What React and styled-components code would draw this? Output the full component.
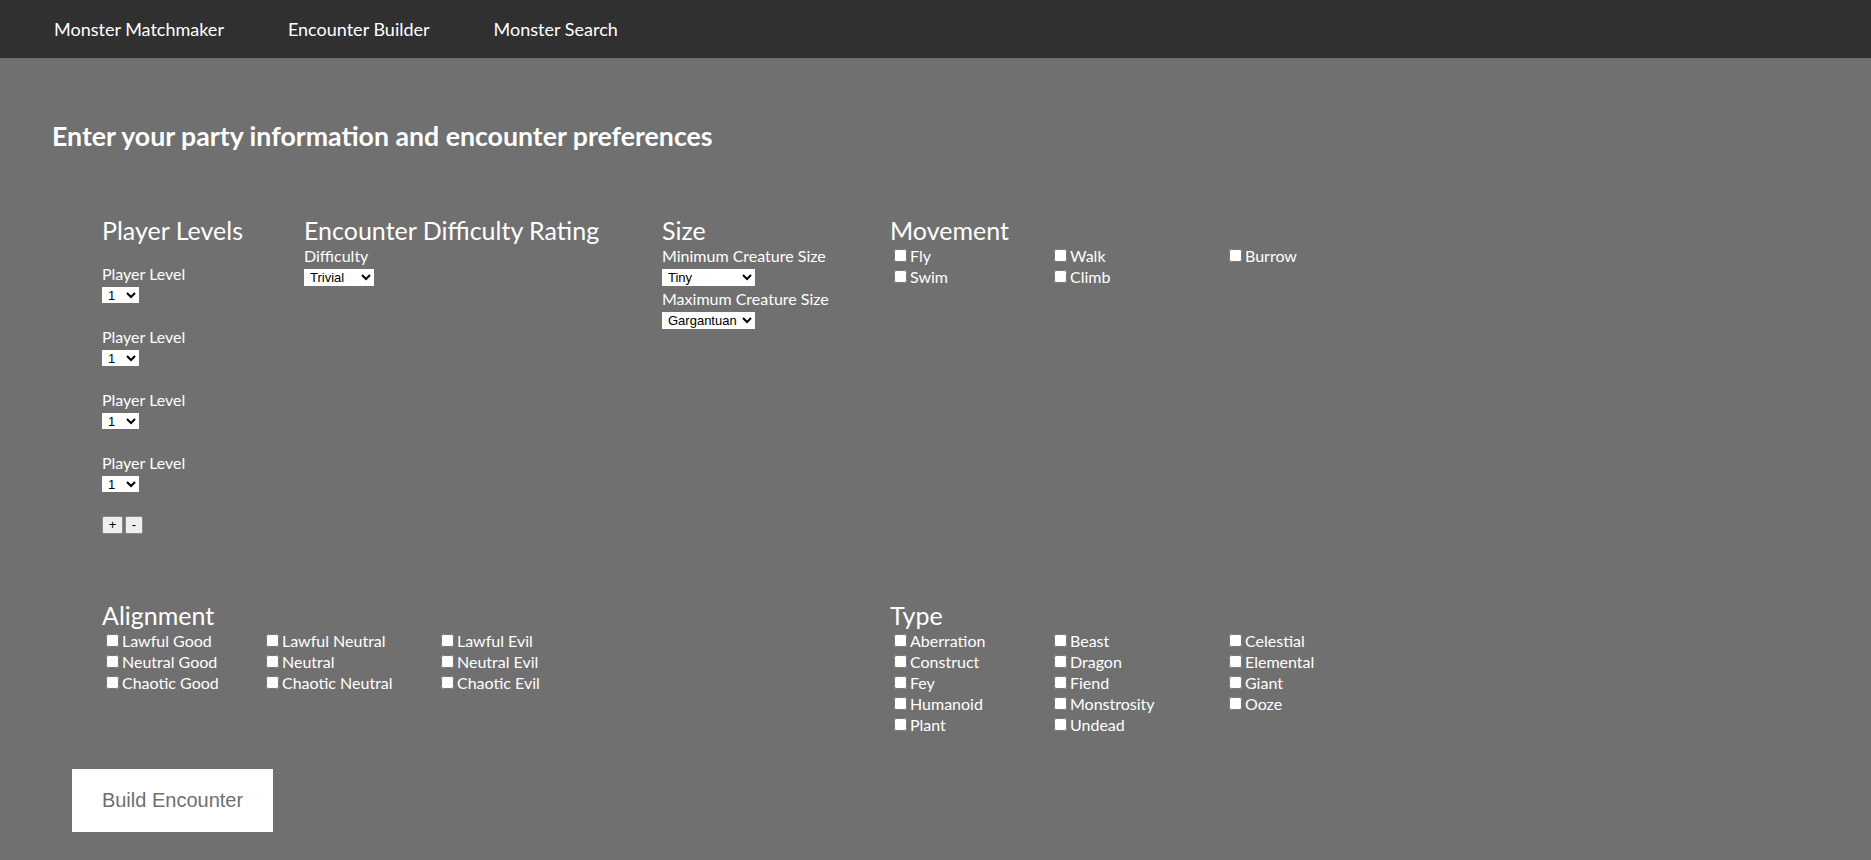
import React from 'react'
import styled, { createGlobalStyle } from 'styled-components'

const GlobalStyle = createGlobalStyle`
  html, body {
    margin: 0;
    background: #707070;
    font-family: Lato, "Open Sans", sans-serif;
    color: #fff;
  }
`

const NavBar = styled.nav`
  height: 58px;
  background: #303030;
  display: flex;
  align-items: center;
  padding-left: 54px;
  gap: 64px;
`

const NavLink = styled.a`
  color: #fff;
  font-size: 18px;
  text-decoration: none;
  cursor: pointer;
`

const Main = styled.main`
  padding: 62px 0 0 52px;
`

const Title = styled.h2`
  margin: 0;
  font-size: 26.7px;
  line-height: 32px;
  font-weight: 700;
`

const FormGrid = styled.div`
  display: grid;
  grid-template-columns: 202px 358px 228px 1fr;
  row-gap: 66px;
  margin: 63px 0 0 50px;
`

const Section = styled.section`
  grid-column: ${p => p.$span || 'auto'};
  display: flex;
  flex-direction: column;
  align-items: flex-start;
`

const Heading = styled.h3`
  margin: 0;
  font-size: 25px;
  line-height: 30px;
  font-weight: 400;
`

const Label = styled.label`
  display: block;
  font-size: 16px;
  line-height: 22px;
`

const Select = styled.select`
  display: block;
  margin: 2px 0 ${p => p.$mb || 0}px;
  height: ${p => p.$h || 17}px;
  width: ${p => p.$w}px;
  border: none;
  border-radius: 0;
  background: #fff;
  color: #000;
  font-family: "Liberation Sans", Arial, sans-serif;
  font-size: 13px;
  padding: 0 0 0 2px;
`

const LevelList = styled.div`
  display: flex;
  flex-direction: column;
  gap: 23px;
  padding-top: 18px;
`

const Stepper = styled.div`
  display: flex;
  gap: 2px;
  margin-top: 24px;
`

const StepButton = styled.button`
  height: 18px;
  width: ${p => p.$w}px;
  padding: 0;
  border: 1px solid #8a8a8a;
  border-radius: 2px;
  background: #efefef;
  color: #000;
  font-family: "Liberation Sans", Arial, sans-serif;
  font-size: 13px;
  line-height: 14px;
`

const CheckGrid = styled.div`
  display: grid;
  grid-template-columns: 160px 175px auto;
`

const CheckItem = styled.label`
  display: flex;
  align-items: center;
  height: 21px;
  font-size: 16px;
  white-space: nowrap;

  input {
    margin: 0 3px 0 4px;
    width: 13px;
    height: 13px;
  }
`

const BuildButton = styled.button`
  margin: 34px 0 30px 20px;
  width: 201px;
  height: 63px;
  border: none;
  background: #fff;
  color: #6c6f73;
  font-family: "Liberation Sans", Arial, sans-serif;
  font-size: 20px;
  cursor: pointer;
`

const levels = Array.from({ length: 20 }, (_, i) => i + 1)
const difficulties = ['Trivial', 'Easy', 'Medium', 'Hard', 'Deadly']
const sizes = ['Tiny', 'Small', 'Medium', 'Large', 'Huge', 'Gargantuan']

const movement = ['Fly', 'Walk', 'Burrow', 'Swim', 'Climb']
const alignments = [
  'Lawful Good', 'Lawful Neutral', 'Lawful Evil',
  'Neutral Good', 'Neutral', 'Neutral Evil',
  'Chaotic Good', 'Chaotic Neutral', 'Chaotic Evil',
]
const types = [
  'Aberration', 'Beast', 'Celestial',
  'Construct', 'Dragon', 'Elemental',
  'Fey', 'Fiend', 'Giant',
  'Humanoid', 'Monstrosity', 'Ooze',
  'Plant', 'Undead',
]

const Checks = ({ items }) => (
  <CheckGrid>
    {items.map(name => (
      <CheckItem key={name}>
        <input type="checkbox" />
        {name}
      </CheckItem>
    ))}
  </CheckGrid>
)

export default function App() {
  const [players, setPlayers] = React.useState([1, 1, 1, 1])

  return (
    <>
      <GlobalStyle />
      <NavBar>
        <NavLink>Monster Matchmaker</NavLink>
        <NavLink>Encounter Builder</NavLink>
        <NavLink>Monster Search</NavLink>
      </NavBar>
      <Main>
        <Title>Enter your party information and encounter preferences</Title>
        <FormGrid>
          <Section>
            <Heading>Player Levels</Heading>
            <LevelList>
              {players.map((lvl, i) => (
                <div key={i}>
                  <Label>Player Level</Label>
                  <Select $w={37} $h={16} defaultValue={lvl}>
                    {levels.map(l => <option key={l}>{l}</option>)}
                  </Select>
                </div>
              ))}
            </LevelList>
            <Stepper>
              <StepButton $w={21} onClick={() => setPlayers([...players, 1])}>+</StepButton>
              <StepButton $w={18} onClick={() => setPlayers(players.slice(0, -1))}>-</StepButton>
            </Stepper>
          </Section>
          <Section>
            <Heading>Encounter Difficulty Rating</Heading>
            <Label>Difficulty</Label>
            <Select $w={70}>
              {difficulties.map(d => <option key={d}>{d}</option>)}
            </Select>
          </Section>
          <Section>
            <Heading>Size</Heading>
            <Label>Minimum Creature Size</Label>
            <Select $w={93} $mb={2} defaultValue="Tiny">
              {sizes.map(s => <option key={s}>{s}</option>)}
            </Select>
            <Label>Maximum Creature Size</Label>
            <Select $w={93} defaultValue="Gargantuan">
              {sizes.map(s => <option key={s}>{s}</option>)}
            </Select>
          </Section>
          <Section>
            <Heading>Movement</Heading>
            <Checks items={movement} />
          </Section>
          <Section $span="1 / 4">
            <Heading>Alignment</Heading>
            <Checks items={alignments} />
          </Section>
          <Section>
            <Heading>Type</Heading>
            <Checks items={types} />
          </Section>
        </FormGrid>
        <BuildButton>Build Encounter</BuildButton>
      </Main>
    </>
  )
}
